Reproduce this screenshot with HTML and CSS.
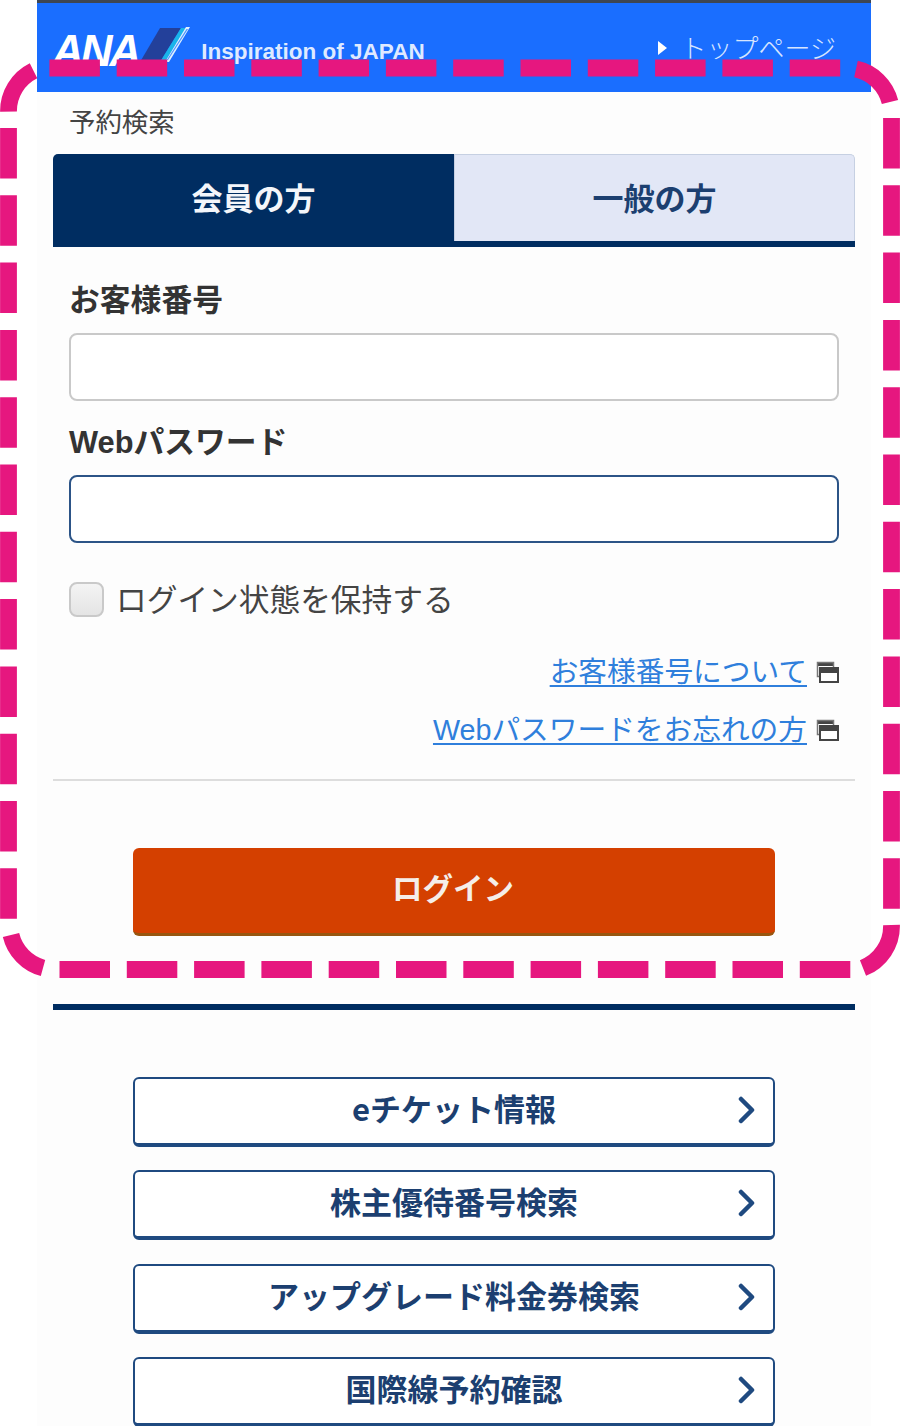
FILE: index.html
```html
<!DOCTYPE html>
<html lang="ja">
<head>
<meta charset="utf-8">
<title>予約検索</title>
<link rel="stylesheet" href="styles.css">
</head>
<body>
<div class="page">
  <header class="header">
    <div class="brand">
      <span class="ana">ANA</span>
      <svg class="tail" viewBox="0 0 50 36" width="50" height="36">
        <polygon points="20,1 41,1 20,35 0,35" fill="#23409a"/>
        <polygon points="41,1 46,1 25,35 20,35" fill="#19b5ea"/>
        <polygon points="46,0 50,0 29,35 25,35" fill="#dff1ff"/>
        <polygon points="46.5,2 48,2 28,33 26.8,33" fill="#4d92ff"/>
      </svg>
      <span class="tagline">Inspiration of JAPAN</span>
    </div>
    <a class="top-link"><span class="tri"></span>トップページ</a>
  </header>
  <main class="main">
    <p class="section-title">予約検索</p>
    <div class="tabs">
      <div class="tab tab-on">会員の方</div>
      <div class="tab tab-off">一般の方</div>
    </div>
    <div class="form">
      <label class="label label-first">お客様番号</label>
      <div class="input input-gray"></div>
      <label class="label label-second">Webパスワード</label>
      <div class="input input-navy"></div>
      <div class="keep"><span class="check"></span><span class="keep-text">ログイン状態を保持する</span></div>
      <div class="link-row link-row-first"><a class="link">お客様番号について</a>
        <svg class="win" viewBox="0 0 24 24" width="24" height="24"><path d="M2 2h17v4H2z" fill="#444"/><rect x="2.5" y="2.5" width="16" height="14" fill="none" stroke="#777" stroke-width="1.5"/><rect x="5" y="8" width="18" height="14" fill="#fff" stroke="#444" stroke-width="2"/><rect x="5" y="8" width="18" height="5" fill="#444"/></svg></div>
      <div class="link-row"><a class="link">Webパスワードをお忘れの方</a>
        <svg class="win" viewBox="0 0 24 24" width="24" height="24"><path d="M2 2h17v4H2z" fill="#444"/><rect x="2.5" y="2.5" width="16" height="14" fill="none" stroke="#777" stroke-width="1.5"/><rect x="5" y="8" width="18" height="14" fill="#fff" stroke="#444" stroke-width="2"/><rect x="5" y="8" width="18" height="5" fill="#444"/></svg></div>
    </div>
    <hr class="rule">
    <div class="login-wrap"><button class="login">ログイン</button></div>
    <div class="navy-rule"></div>
    <nav class="nav-list">
      <a class="nav-btn">eチケット情報<svg class="chev" viewBox="0 0 18 28" width="18" height="28"><path d="M3 3l11 11L3 25" fill="none" stroke="#1f4a80" stroke-width="4.5" stroke-linecap="round" stroke-linejoin="round"/></svg></a>
      <a class="nav-btn">株主優待番号検索<svg class="chev" viewBox="0 0 18 28" width="18" height="28"><path d="M3 3l11 11L3 25" fill="none" stroke="#1f4a80" stroke-width="4.5" stroke-linecap="round" stroke-linejoin="round"/></svg></a>
      <a class="nav-btn">アップグレード料金券検索<svg class="chev" viewBox="0 0 18 28" width="18" height="28"><path d="M3 3l11 11L3 25" fill="none" stroke="#1f4a80" stroke-width="4.5" stroke-linecap="round" stroke-linejoin="round"/></svg></a>
      <a class="nav-btn">国際線予約確認<svg class="chev" viewBox="0 0 18 28" width="18" height="28"><path d="M3 3l11 11L3 25" fill="none" stroke="#1f4a80" stroke-width="4.5" stroke-linecap="round" stroke-linejoin="round"/></svg></a>
    </nav>
  </main>
</div>
<svg class="overlay" viewBox="0 0 900 1426" width="900" height="1426" aria-hidden="true">
  <g fill="none" stroke="#e6177f" stroke-width="16.8">
    <path class="dash" d="M49.4 68H840.4"/>
    <path class="dash" d="M891.5 118V909"/>
    <path class="dash" d="M59.5 969.5H850.5"/>
    <path class="dash" d="M8.5 128V919"/>
    <path d="M8.5 111.7A45 45 0 0 1 33.5 70.8"/>
    <path d="M856 69A45 45 0 0 1 890 102"/>
    <path d="M891.5 925A45 45 0 0 1 863 968"/>
    <path d="M11 935A45 45 0 0 0 43 968"/>
  </g>
</svg>
</body>
</html>
```
FILE: styles.css
```css
* { box-sizing: border-box; }
html, body { margin: 0; padding: 0; }
body {
  width: 900px;
  height: 1426px;
  overflow: hidden;
  background: #fff;
  font-family: "Noto Sans CJK JP", "Noto Sans", sans-serif;
  color: #333;
  position: relative;
}
.page { width: 834px; margin-left: 37px; background: #fdfdfd; height: 1426px; overflow: hidden; }
.header {
  height: 92px;
  border-top: 3px solid #3e4652;
  background: #1a6eff;
  display: flex;
  justify-content: space-between;
  padding: 23px 35px 0 15px;
  color: #fff;
}
.brand { display: flex; align-items: flex-start; }
.ana {
  font-family: "Liberation Sans", sans-serif;
  font-weight: 700;
  font-style: italic;
  font-size: 44px;
  line-height: 50px;
  letter-spacing: -3px;
}
.tail { margin: 1px 0 0 2px; }
.tagline {
  font-family: "Liberation Sans", sans-serif;
  font-weight: 700;
  font-size: 22.5px;
  line-height: 30px;
  color: #dfeaff;
  margin: 11px 0 0 11px;
  white-space: nowrap;
}
.top-link { display: flex; align-items: center; font-size: 26px; line-height: 42px; height: 42px; color: #d7e5ff; font-weight: 300; }
.tri { width: 0; height: 0; border-left: 9px solid #fff; border-top: 7px solid transparent; border-bottom: 7px solid transparent; margin: 2px 14px 0 4px; }
.main { padding: 0 16px; }
.section-title { margin: 0; height: 62px; padding: 11px 0 0 16px; font-size: 26.4px; line-height: 36px; color: #444; }
.tabs { display: flex; height: 93px; border-bottom: 6px solid #002d61; }
.tab { width: 50%; display: flex; align-items: center; justify-content: center; font-size: 31px; font-weight: 700; padding-bottom: 3px; }
.tab-on { background: #002d61; color: #f4f6fa; border-radius: 5px 0 0 0; }
.tab-off { background: #e2e7f6; color: #1c3f70; border: 1px solid #c6d0e2; border-bottom: 0; border-radius: 0 5px 0 0; }
.form { padding: 0 16px; }
.label { display: block; font-size: 30.8px; font-weight: 700; line-height: 42px; color: #333; font-family: "Liberation Sans", "Noto Sans CJK JP", sans-serif; }
.label-first { margin-top: 33px; height: 53px; }
.label-second { margin-top: 21px; height: 53px; }
.input { height: 68px; border-radius: 8px; background: #fff; }
.input-gray { border: 2px solid #c9c9c9; }
.input-navy { border: 2px solid #2c5487; }
.keep { display: flex; align-items: center; margin-top: 38px; height: 36px; font-size: 30.7px; color: #444; gap: 12px; white-space: nowrap; }
.keep-text { padding-bottom: 4px; }
.check { width: 35px; height: 35px; border-radius: 8px; border: 2px solid #c9c9c9; background: linear-gradient(#f4f4f4, #e4e4e4); }
.link-row { display: flex; justify-content: flex-end; align-items: center; height: 40px; margin-top: 18px; gap: 8px; }
.link-row-first { margin-top: 35px; }
.link { color: #2f7fdc; font-size: 28.7px; line-height: 40px; text-decoration: underline; text-underline-offset: 3px; white-space: nowrap; font-family: "Liberation Sans", "Noto Sans CJK JP", sans-serif; }
.win { flex: none; }
.rule { margin: 29px 0 0; border: 0; height: 2px; background: #ddd; }
.login-wrap { margin-top: 67px; display: flex; justify-content: center; }
.login { width: 642px; height: 88px; border: 0; border-bottom: 3px solid #98560f; border-radius: 6px; background: #d44000; color: #f5eee9; font-family: inherit; font-size: 30.5px; font-weight: 700; padding: 0 2px 8px 0; }
.navy-rule { margin-top: 68px; height: 6px; background: #002d61; }
.nav-list { margin-top: 67px; display: flex; flex-direction: column; align-items: center; gap: 23.3px; }
.nav-btn {
  position: relative;
  width: 642px;
  height: 70px;
  flex: none;
  display: flex;
  align-items: center;
  justify-content: center;
  border: 2px solid #1f4a80;
  border-bottom-width: 4px;
  border-radius: 6px;
  background: #fff;
  color: #1c3f70;
  font-size: 31px;
  font-weight: 700;
  padding-bottom: 7px;
}
.chev { position: absolute; right: 17px; top: 17px; }
.overlay { position: absolute; left: 0; top: 0; pointer-events: none; }
.dash { stroke-dasharray: 50.5 16.8; }
```
